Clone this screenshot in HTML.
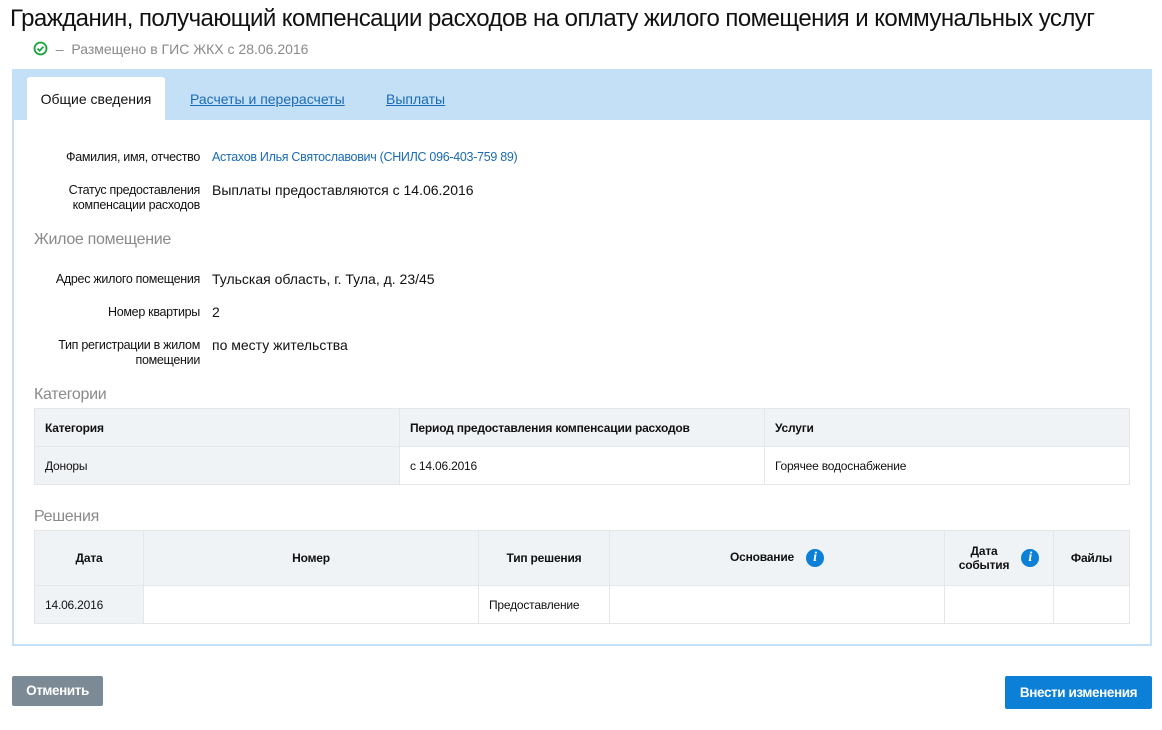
<!DOCTYPE html>
<html><head><meta charset="utf-8"><style>
*{box-sizing:border-box;margin:0;padding:0}
body{width:1162px;height:730px;background:#fff;font-family:"Liberation Sans",sans-serif;color:#111;position:relative;overflow:hidden}
.abs{position:absolute;white-space:nowrap}
h1{position:absolute;left:10px;top:5px;font-weight:normal;font-size:24px;white-space:nowrap;letter-spacing:-0.55px}
.sub{left:33px;top:41px;font-size:14px;color:#8a8a8a}
.bar{position:absolute;left:12px;top:69px;width:1140px;height:52px;background:#c4e0f6}
.tab{position:absolute;top:77px;height:44px;font-size:14px;line-height:44px}
.panel{position:absolute;left:12px;top:120px;width:1140px;height:526px;border:2px solid #c4e0f6;border-top:none;background:#fff}
.lab{position:absolute;right:962px;font-size:12.5px;text-align:right;line-height:15px;letter-spacing:-0.3px}
.val{position:absolute;left:212px;font-size:14px;white-space:nowrap}
.h2{position:absolute;left:34px;font-size:16px;color:#8a8a8a;letter-spacing:-0.3px}
table{position:absolute;left:34px;width:1096px;border-collapse:collapse;font-size:12px;letter-spacing:-0.2px}
td,th{border:1px solid #e3e7ea;padding:0 10px}
th{background:#eff3f6;font-weight:bold}
.g{background:#eff3f6}
.btn{position:absolute;color:#fff;font-size:13.5px;text-align:center;border-radius:2px;font-weight:bold;letter-spacing:-0.4px}
.i{display:inline-block;width:18px;height:18px;border-radius:50%;background:#0c7fd6;color:#fff;font-style:italic;font-family:"Liberation Serif",serif;font-weight:bold;font-size:14px;line-height:18px;text-align:center;vertical-align:middle;margin-left:12px}
</style></head><body>
<h1>Гражданин, получающий компенсации расходов на оплату жилого помещения и коммунальных услуг</h1>
<div class="abs sub"><svg width="15" height="15" viewBox="0 0 15 15" style="vertical-align:-2px"><circle cx="7.5" cy="7.5" r="6" fill="none" stroke="#1aa33a" stroke-width="1.8"/><path d="M4.5 7.7l2.1 2 3.8-4" fill="none" stroke="#1aa33a" stroke-width="1.8"/></svg>&nbsp; –&nbsp; Размещено в ГИС ЖКХ с 28.06.2016</div>
<div class="bar"></div>
<div class="tab" style="left:27px;width:138px;background:#fff;text-align:center;border-radius:3px 3px 0 0">Общие сведения</div>
<div class="tab" style="left:190px;color:#1a6bb8;text-decoration:underline">Расчеты и перерасчеты</div>
<div class="tab" style="left:386px;color:#1a6bb8;text-decoration:underline">Выплаты</div>
<div class="panel"></div>
<div class="lab" style="top:150px">Фамилия, имя, отчество</div>
<div class="val" style="top:150px;font-size:12.5px;color:#1a6bb8;letter-spacing:-0.3px">Астахов Илья Святославович (СНИЛС 096-403-759 89)</div>
<div class="lab" style="top:183px">Статус предоставления<br>компенсации расходов</div>
<div class="val" style="top:182px">Выплаты предоставляются с 14.06.2016</div>
<div class="h2" style="top:231px">Жилое помещение</div>
<div class="lab" style="top:272px">Адрес жилого помещения</div>
<div class="val" style="top:271px">Тульская область, г. Тула, д. 23/45</div>
<div class="lab" style="top:305px">Номер квартиры</div>
<div class="val" style="top:304px">2</div>
<div class="lab" style="top:338px">Тип регистрации в жилом<br>помещении</div>
<div class="val" style="top:337px">по месту жительства</div>
<div class="h2" style="top:386px">Категории</div>
<table style="top:408px">
<tr style="height:38px"><th style="text-align:left;width:365px">Категория</th><th style="text-align:left;width:365px">Период предоставления компенсации расходов</th><th style="text-align:left">Услуги</th></tr>
<tr style="height:38px"><td class="g">Доноры</td><td>с 14.06.2016</td><td>Горячее водоснабжение</td></tr>
</table>
<div class="h2" style="top:508px">Решения</div>
<table style="top:530px">
<tr style="height:55px"><th style="width:109px">Дата</th><th style="width:335px">Номер</th><th style="width:131px">Тип решения</th><th style="width:335px">Основание<span class="i">i</span></th><th style="width:109px"><span style="display:inline-block;vertical-align:middle">Дата<br>события</span><span class="i">i</span></th><th>Файлы</th></tr>
<tr style="height:38px"><td class="g">14.06.2016</td><td></td><td>Предоставление</td><td></td><td></td><td></td></tr>
</table>
<div class="btn" style="left:12px;top:676px;width:91px;height:30px;line-height:30px;background:#7b8a94">Отменить</div>
<div class="btn" style="left:1005px;top:676px;width:147px;height:33px;line-height:33px;background:#0c7fd6">Внести изменения</div>
</body></html>
